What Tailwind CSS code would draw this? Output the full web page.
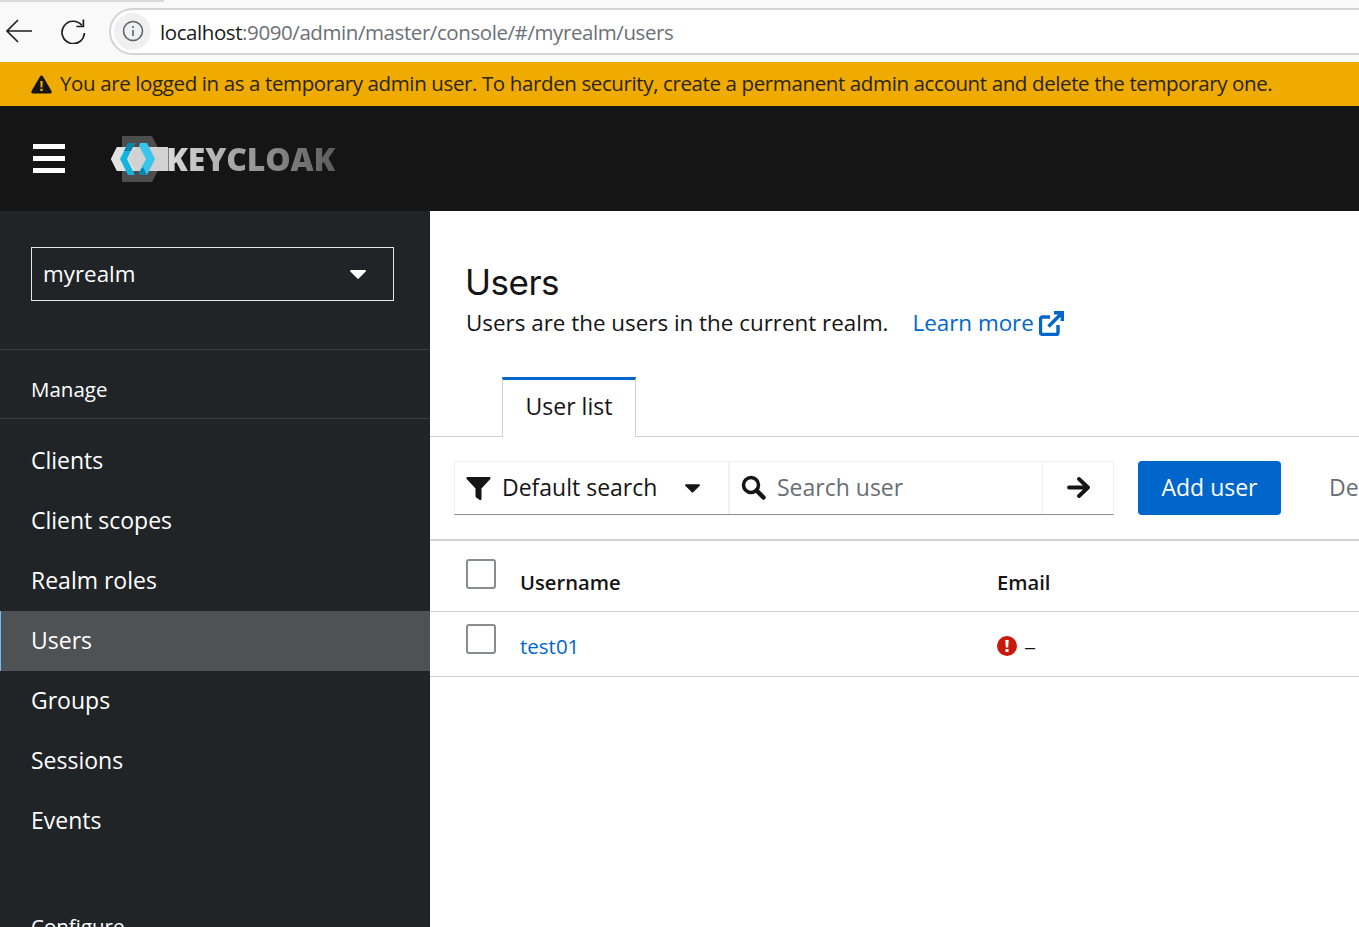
<!DOCTYPE html>
<html lang="en">
<head>
  <meta charset="UTF-8">
  <title>Keycloak - Users</title>
  <script src="https://cdn.jsdelivr.net/npm/@tailwindcss/browser@4"></script>
</head>
<body class="h-[927px] overflow-hidden bg-white font-['Open_Sans',sans-serif] text-[#151515]">

  <!-- Browser bar -->
  <div class="h-[62px] bg-[#f9f9f9] flex items-center relative overflow-hidden">
    <div class="absolute top-0 left-0 w-[164px] h-[2px] bg-[#d8d8d8]"></div>
    <svg class="shrink-0 ml-[6px] w-[26px] h-[26px]" viewBox="0 0 26 26" fill="none" stroke="#1f1f1f" stroke-width="1.6"><path d="M1 13h25M12 2 1 13l11 11"/></svg>
    <svg class="shrink-0 ml-[28px] w-[26px] h-[26px]" viewBox="0 0 26 26" fill="none" stroke="#1f1f1f" stroke-width="1.7"><path d="M22 7.5A11.2 11.2 0 1 0 24.4 15"/><path d="M23.4 1.5v7h-7"/></svg>
    <div class="ml-[23px] w-[1300px] h-[47px] shrink-0 rounded-full border-2 border-[#d4d4d4] bg-white flex items-center pl-[3px]">
      <div class="shrink-0 w-[37px] h-[37px] rounded-full bg-[#f0f0f0] flex items-center justify-center">
        <svg class="w-[22px] h-[22px]" viewBox="0 0 22 22" fill="none" stroke="#5f6368" stroke-width="1.6"><circle cx="11" cy="11" r="9.5"/><path d="M11 10v6M11 6v2"/></svg>
      </div>
      <span class="ml-[9px] mt-[3px] text-[20.5px] tracking-[-0.42px] whitespace-nowrap text-[#1a1a1a]">localhost<span class="text-[#6c7075]">:9090/admin/master/console/#/myrealm/users</span></span>
    </div>
  </div>

  <!-- Warning banner -->
  <div class="h-[44px] bg-[#f0ab00] flex items-center pl-[31px]">
    <svg class="w-[21px] h-[19px] shrink-0" viewBox="0 0 21 19"><path fill="#151515" d="M10.5.5c.7 0 1.2.4 1.5.9l8.500 14.700c.6 1.100-.1 2.400-1.400 2.400H1.900C.6 18.500-.1 17.200.5 16.100L9 1.400c.3-.5.8-.9 1.500-.9z"/><path fill="#f0ab00" d="M9.300 6h2.400l-.3 6.500H9.600zM9.300 13.700h2.400V16H9.300z"/></svg>
    <span class="ml-[8px] -mt-[2px] text-[20.5px] tracking-[-0.38px] whitespace-nowrap text-[#2b2412]">You are logged in as a temporary admin user. To harden security, create a permanent admin account and delete the temporary one.</span>
  </div>

  <!-- Masthead -->
  <header class="h-[105px] bg-[#151515] flex items-center pl-[33px]">
    <div class="w-[32px] flex flex-col gap-[7px] -mt-[1px]">
      <div class="h-[5px] bg-white"></div>
      <div class="h-[5px] bg-white"></div>
      <div class="h-[5px] bg-white"></div>
    </div>
    <div class="ml-[46px] flex items-center">
      <svg class="w-[57px] h-[46px] shrink-0" viewBox="0 0 57 46">
        <path fill="#4d4d4d" d="M11 0h30l12 23-12 23H11z"/>
        <path fill="#d2d2d2" d="M6 11h51v24H6L0 23z"/>
        <path fill="#e2e2e2" d="M0 23 6 11h18l-7 12 7 12H6z"/>
        <path fill="#14b4e0" d="M17 7h7L16 23l8 16h-7L9 23z"/>
        <path fill="#0a86aa" d="M17 7h7l-4 8h-7z"/>
        <path fill="#38c6ee" d="M36 7h-7l-1 3 7 13-7 13 1 3h7l8-16z"/>
        <path fill="#0a86aa" d="M29 39h7l-4-8-4 5z"/>
      </svg>
      <span class="-ml-[2px] font-extrabold text-[32px] leading-none tracking-[-0.2px] bg-gradient-to-r from-[#dcdcdc] to-[#5c5c5c] bg-clip-text text-transparent">KEYCLOAK</span>
    </div>
  </header>

  <div class="flex h-[716px]">
    <!-- Sidebar -->
    <aside class="w-[430px] shrink-0 bg-[#212427] text-white overflow-hidden">
      <div class="h-[139px] pt-[36px] pl-[31px] border-b border-[#3c3f42]">
        <div class="w-[363px] h-[54px] border border-[#e6e6e6] flex items-center justify-between pl-[11px] pr-[27px]">
          <span class="text-[22.4px]">myrealm</span>
          <svg class="w-[16px] h-[9px]" viewBox="0 0 16 9"><path fill="#fff" d="M1 0h14c.8 0 1.200.9.700 1.500L8.700 8.600c-.4.400-1 .4-1.400 0L.3 1.500C-.2.9.2 0 1 0z"/></svg>
        </div>
      </div>
      <div class="h-[69px] pl-[31px] pt-[11px] flex items-center border-b border-[#3c3f42] text-[20.5px]">Manage</div>
      <nav class="pt-[12px] text-[23px]">
        <a class="h-[60px] pl-[31px] pb-[2px] flex items-center">Clients</a>
        <a class="h-[60px] pl-[31px] pb-[2px] flex items-center">Client scopes</a>
        <a class="h-[60px] pl-[31px] pb-[2px] flex items-center">Realm roles</a>
        <a class="h-[60px] pl-[30px] pb-[2px] flex items-center bg-[#4f5255] border-l border-[#73bcf7]">Users</a>
        <a class="h-[60px] pl-[31px] pb-[2px] flex items-center">Groups</a>
        <a class="h-[60px] pl-[31px] pb-[2px] flex items-center">Sessions</a>
        <a class="h-[60px] pl-[31px] pb-[2px] flex items-center">Events</a>
      </nav>
      <div class="pl-[31px] mt-[60px] text-[20.5px]">Configure</div>
    </aside>

    <!-- Main -->
    <main class="flex-1 min-w-0 overflow-hidden">
      <section class="h-[166px] pl-[36px] pt-[49px]">
        <h1 class="-ml-[1px] text-[35px] leading-[44px] font-['Inter',sans-serif] tracking-[-0.5px]">Users</h1>
        <p class="text-[22.4px] leading-[34px] mt-[2px] whitespace-nowrap">Users are the users in the current realm.<a class="ml-[24px] text-[#0066cc] inline-flex items-center gap-[5px]">Learn more<svg class="w-[25px] h-[25px]" viewBox="0 0 25 25" fill="none" stroke="#0066cc" stroke-width="3.400"><path d="M19 14v7.500a2 2 0 0 1-2 2H3.500a2 2 0 0 1-2-2V8a2 2 0 0 1 2-2H11M9.500 15.500 22 3M15 1.700h8.300V10"/></svg></a></p>
      </section>

      <!-- Tabs -->
      <div class="h-[60px] border-b border-[#d2d2d2] pl-[72px]">
        <div class="w-[134px] h-[60px] pb-[4px] bg-white border-t-[3px] border-t-[#0066cc] border-x border-x-[#d2d2d2] flex items-center justify-center text-[23px]">User list</div>
      </div>

      <!-- Toolbar -->
      <div class="h-[104px] pl-[24px] pt-[24px] flex items-start border-b-2 border-[#d2d2d2] whitespace-nowrap">
        <div class="shrink-0 w-[660px] h-[54px] flex border border-[#f0f0f0] border-b-[#8a8d90]">
          <div class="shrink-0 w-[275px] flex items-center pl-[11px] border-r-2 border-[#f0f0f0]">
            <svg class="shrink-0 w-[25px] h-[25px]" viewBox="0 0 25 25"><path fill="#151515" d="M1.500 1h22c1 0 1.500 1.200.8 2L15.500 12.500V23c0 1-1 1.500-1.800 1l-3.500-2.500c-.4-.3-.7-.7-.7-1.200v-7.800L.7 3c-.7-.8-.2-2 .8-2z"/></svg>
            <span class="ml-[11px] -mt-[2px] text-[23px]">Default search</span>
            <svg class="shrink-0 ml-[28px] w-[15px] h-[9px]" viewBox="0 0 16 9"><path fill="#151515" d="M1 0h14c.8 0 1.200.9.700 1.500L8.700 8.600c-.4.400-1 .4-1.400 0L.3 1.500C-.2.9.2 0 1 0z"/></svg>
          </div>
          <div class="shrink-0 w-[313px] flex items-center pl-[11px] border-r border-[#f0f0f0]">
            <svg class="shrink-0 w-[25px] h-[25px] -mt-[2px]" viewBox="0 0 25 25" fill="none" stroke="#151515"><circle cx="10" cy="10" r="7.500" stroke-width="3.500"/><path d="m15.500 15.500 7 7" stroke-width="4.500" stroke-linecap="round"/></svg>
            <span class="ml-[11px] -mt-[2px] text-[23px] text-[#6a6e73]">Search user</span>
          </div>
          <div class="flex-1 flex items-center justify-center">
            <svg class="shrink-0 w-[23px] h-[21px] -mt-[2px]" viewBox="0 0 23 21" fill="none" stroke="#151515" stroke-width="3.800" stroke-linecap="round" stroke-linejoin="round"><path d="M2 10.500h18M12 2l9 8.500-9 8.500"/></svg>
          </div>
        </div>
        <button class="shrink-0 ml-[24px] w-[143px] h-[54px] pb-[2px] bg-[#0066cc] rounded-[4px] text-white text-[23px]">Add user</button>
        <span class="ml-[48px] mt-[9px] text-[23px] text-[#6a6e73]">Delete user</span>
      </div>

      <!-- Table -->
      <div class="h-[71px] flex border-b border-[#d2d2d2]">
        <div class="w-[36px] shrink-0"></div>
        <div class="w-[54px] shrink-0 pt-[18px]"><div class="w-[30px] h-[30px] rounded-[3px] border-2 border-[#8a8d90]"></div></div>
        <div class="w-[477px] shrink-0 pt-[25px] text-[20.2px] leading-[32px] font-semibold">Username</div>
        <div class="pt-[25px] text-[20.2px] leading-[32px] font-semibold">Email</div>
      </div>
      <div class="h-[65px] flex border-b border-[#d2d2d2]">
        <div class="w-[36px] shrink-0"></div>
        <div class="w-[54px] shrink-0 pt-[12px]"><div class="w-[30px] h-[30px] rounded-[3px] border-2 border-[#8a8d90]"></div></div>
        <div class="w-[477px] shrink-0 pt-[18px] text-[20.5px] leading-[32px] text-[#0066cc]">test01</div>
        <div class="flex items-center pt-[4px] text-[24px] font-light gap-[7px]">
          <svg class="w-[20px] h-[20px]" viewBox="0 0 20 20"><circle cx="10" cy="10" r="10" fill="#c9190b"/><path fill="#fff" d="M8.300 4h3.400l-.5 7.500H8.800zM8.500 13h3v3h-3z"/></svg>
          <span>–</span>
        </div>
      </div>
    </main>
  </div>
</body>
</html>
